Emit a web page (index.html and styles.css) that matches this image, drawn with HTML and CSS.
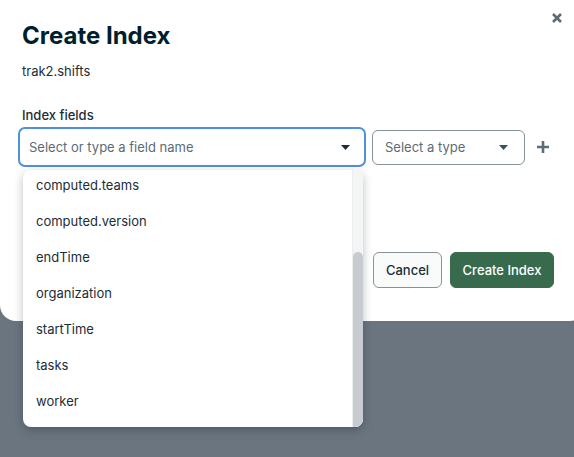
FILE: index.html
```html
<!DOCTYPE html>
<html>
<head>
<meta charset="utf-8">
<link rel="stylesheet" href="styles.css">
</head>
<body>
<div class="modal">
  <button class="close" aria-label="Close">
    <svg width="10" height="10" viewBox="0 0 10 10"><path d="M1 1L9 9M9 1L1 9" stroke="#5c6c75" stroke-width="2.6" stroke-linecap="butt"/></svg>
  </button>
  <h1 class="title">Create Index</h1>
  <div class="subtitle">trak2.shifts</div>
  <div class="label">Index fields</div>
  <div class="field-row">
    <div class="combo">
      <span class="placeholder">Select or type a field name</span>
      <svg class="caret" width="9" height="5" viewBox="0 0 9 5"><path d="M0 0H9L4.5 5Z" fill="#1c2d38"/></svg>
    </div>
    <div class="type-select">
      <span class="placeholder">Select a type</span>
      <svg class="caret" width="9" height="5" viewBox="0 0 9 5"><path d="M0 0H9L4.5 5Z" fill="#3d4f58"/></svg>
    </div>
    <button class="add" aria-label="Add field">
      <svg width="12" height="12" viewBox="0 0 12 12"><path d="M6 0V12M0 6H12" stroke="#5c6c75" stroke-width="2.6"/></svg>
    </button>
  </div>
  <div class="actions">
    <button class="btn btn-cancel">Cancel</button>
    <button class="btn btn-primary">Create Index</button>
  </div>
  <div class="menu">
    <ul class="menu-list">
      <li>computed.teams</li>
      <li>computed.version</li>
      <li>endTime</li>
      <li>organization</li>
      <li>startTime</li>
      <li>tasks</li>
      <li>worker</li>
    </ul>
    <div class="scrollbar"><div class="thumb"></div></div>
  </div>
</div>
</body>
</html>
```
FILE: styles.css
```css
html, body {
  margin: 0;
  padding: 0;
}
body {
  width: 574px;
  height: 457px;
  overflow: hidden;
  background: #6b7580;
  font-family: Inter, "Noto Sans", sans-serif;
  color: #1c2d38;
}
.modal {
  position: relative;
  width: 586px;
  height: 321px;
  box-sizing: border-box;
  background: #ffffff;
  border-radius: 0 0 16px 16px;
  padding: 21px 32px 0 22px;
}
.close {
  position: absolute;
  top: 12px;
  left: 551px;
  width: 12px;
  height: 12px;
  padding: 0;
  border: 0;
  background: none;
  display: flex;
  align-items: center;
  justify-content: center;
}
.title {
  margin: 0;
  font-size: 24px;
  line-height: 30px;
  font-weight: 700;
  color: #001e2b;
}
.subtitle {
  margin-top: 10px;
  font-size: 13px;
  line-height: 20px;
  color: #1c2d38;
}
.label {
  margin-top: 24px;
  font-size: 13px;
  line-height: 20px;
  font-weight: 500;
  color: #1c2d38;
}
.field-row {
  margin-top: 2px;
  margin-left: -4px;
  display: flex;
  align-items: center;
}
.combo {
  width: 348px;
  height: 40px;
  box-sizing: border-box;
  border: 2px solid #4e90e0;
  border-radius: 7px;
  display: flex;
  align-items: center;
  justify-content: space-between;
  padding: 0 14px 0 9px;
}
.placeholder {
  font-size: 13px;
  color: #5c6c75;
}
.caret {
  display: block;
}
.type-select {
  margin-left: 6px;
  width: 153px;
  height: 35px;
  box-sizing: border-box;
  border: 1px solid #889397;
  border-radius: 6px;
  display: flex;
  align-items: center;
  justify-content: space-between;
  padding: 0 16px 0 12px;
}
.add {
  margin-left: 12px;
  width: 12px;
  height: 12px;
  padding: 0;
  border: 0;
  background: none;
  display: flex;
}
.actions {
  margin-top: 85px;
  display: flex;
  justify-content: flex-end;
  gap: 8px;
}
.btn {
  height: 36px;
  box-sizing: border-box;
  border-radius: 6px;
  font-family: Inter, "Noto Sans", sans-serif;
  font-size: 13px;
  font-weight: 500;
  padding: 0;
}
.btn-cancel {
  width: 69px;
  background: #f9fbfa;
  border: 1px solid #889397;
  color: #1c2d38;
}
.btn-primary {
  width: 104px;
  background: #386b4e;
  border: 1px solid #386b4e;
  color: #ffffff;
}
.menu {
  position: absolute;
  left: 23px;
  top: 170px;
  width: 340px;
  height: 257px;
  background: #ffffff;
  border-radius: 8px;
  box-shadow: 0 3px 10px rgba(0, 20, 40, 0.28);
  overflow: hidden;
  display: flex;
}
.menu-list {
  flex: 1;
  list-style: none;
  margin: -3px 0 0 0;
  padding: 0;
}
.menu-list li {
  height: 36px;
  line-height: 36px;
  padding-left: 13px;
  font-size: 13px;
  color: #1c2d38;
}
.scrollbar {
  width: 10px;
  background: #f4f5f5;
  border-left: 1px solid #eceeee;
  display: flex;
  flex-direction: column;
}
.thumb {
  margin-top: auto;
  height: 175px;
  background: #c8ccd0;
  border-radius: 5px 5px 0 0;
}
```
